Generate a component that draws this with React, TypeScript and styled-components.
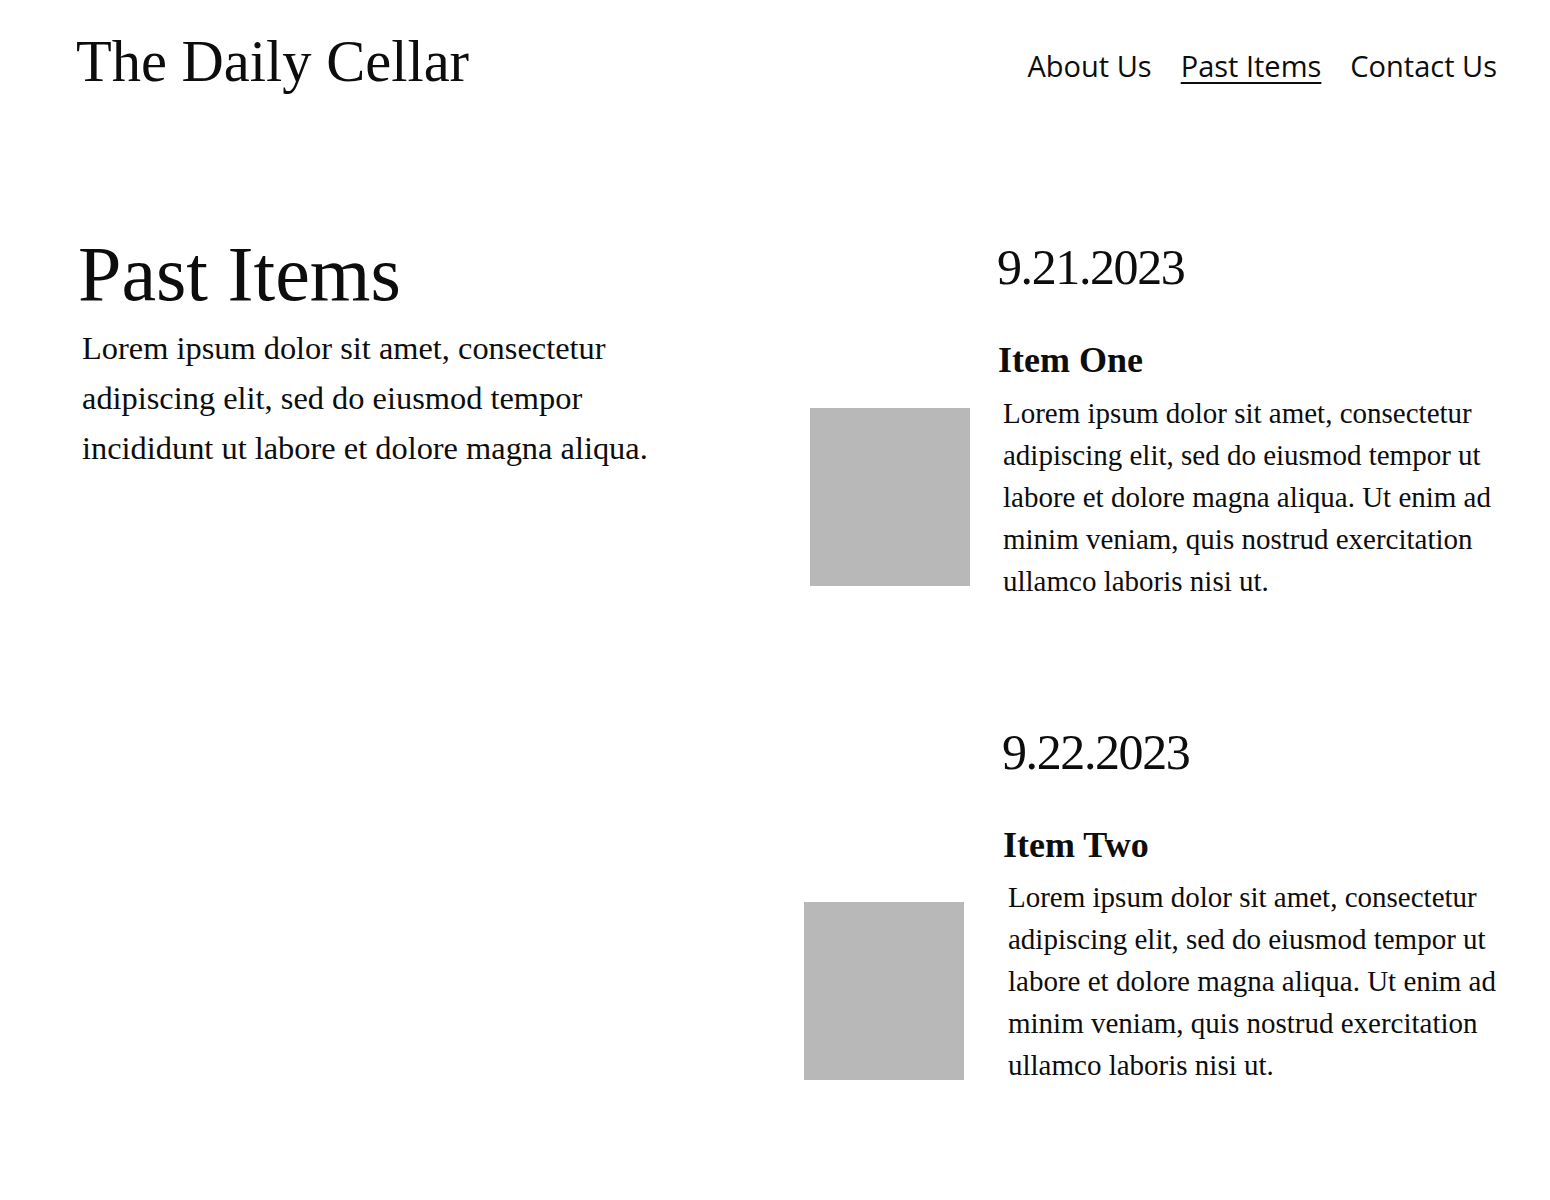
import styled, { createGlobalStyle } from "styled-components"

const GlobalStyle = createGlobalStyle`
  body {
    margin: 0;
    background-color: #ffffff;
    color: #0d0d0d;
    font-family: "Liberation Serif", serif;
  }
`

const Page = styled.div`
  width: 1550px;
  min-height: 1200px;
`

const Header = styled.header`
  display: flex;
  justify-content: space-between;
  align-items: center;
  padding: 30px 53px 0 76px;
`

const Logo = styled.h1`
  margin: 0;
  font-family: "Liberation Serif", serif;
  font-size: 58.5px;
  font-weight: 400;
  line-height: 1.1;
`

const NavList = styled.nav`
  display: flex;
  gap: 29px;
  padding-top: 6px;
`

const NavLink = styled.a<{ $active?: boolean }>`
  font-family: "Open Sans", sans-serif;
  font-size: 29px;
  font-weight: 400;
  color: #0d0d0d;
  text-decoration: ${(p) => (p.$active ? "underline" : "none")};
  text-decoration-thickness: 2px;
  text-underline-offset: 5px;
  cursor: pointer;
`

const Main = styled.main`
  display: grid;
  grid-template-columns: 720px 1fr;
  padding: 133px 53px 80px 78px;
`

const Intro = styled.section`
  display: flex;
  flex-direction: column;
`

const PageTitle = styled.h2`
  margin: 0;
  font-family: "Liberation Serif", serif;
  font-size: 78px;
  font-weight: 400;
  line-height: 1.2;
`

const IntroText = styled.p`
  margin: 2px 0 0 4px;
  width: 600px;
  font-size: 32.4px;
  line-height: 50px;
`

const Entries = styled.section`
  display: flex;
  flex-direction: column;
  gap: 120px;
  margin-top: 10px;
`

const Entry = styled.article<{ $shift: number }>`
  display: flex;
  flex-direction: column;
  padding-left: ${(p) => p.$shift}px;
`

const EntryDate = styled.h3`
  margin: 0 0 0 199px;
  font-family: "Liberation Serif", serif;
  font-size: 50px;
  font-weight: 400;
  letter-spacing: -1.4px;
  line-height: 1.2;
`

const EntryTitle = styled.h4`
  margin: 42px 0 9px 200px;
  font-size: 36px;
  font-weight: 700;
  line-height: 1.2;
`

const EntryRow = styled.div<{ $gap: number }>`
  display: flex;
  align-items: center;
  gap: ${(p) => p.$gap}px;
`

const Thumb = styled.div<{ $nudge: number; $drop: number }>`
  flex: 0 0 160px;
  height: 178px;
  margin-left: ${(p) => p.$nudge}px;
  margin-top: ${(p) => p.$drop * 2}px;
  background-color: #b8b8b8;
`

const EntryText = styled.p`
  margin: 0;
  width: 500px;
  font-size: 29px;
  line-height: 42px;
`

const lorem =
  "Lorem ipsum dolor sit amet, consectetur adipiscing elit, sed do eiusmod tempor ut labore et dolore magna aliqua. Ut enim ad minim veniam, quis nostrud exercitation ullamco laboris nisi ut."

const items = [
  { date: "9.21.2023", title: "Item One", shift: 0, nudge: 12, gap: 33, drop: 0 },
  { date: "9.22.2023", title: "Item Two", shift: 5, nudge: 1, gap: 44, drop: 10 },
]

export default function App() {
  return (
    <Page>
      <GlobalStyle />
      <Header>
        <Logo>The Daily Cellar</Logo>
        <NavList>
          <NavLink>About Us</NavLink>
          <NavLink $active>Past Items</NavLink>
          <NavLink>Contact Us</NavLink>
        </NavList>
      </Header>
      <Main>
        <Intro>
          <PageTitle>Past Items</PageTitle>
          <IntroText>
            Lorem ipsum dolor sit amet, consectetur adipiscing elit, sed do eiusmod tempor
            incididunt ut labore et dolore magna aliqua.
          </IntroText>
        </Intro>
        <Entries>
          {items.map((item) => (
            <Entry key={item.date} $shift={item.shift}>
              <EntryDate>{item.date}</EntryDate>
              <EntryTitle>{item.title}</EntryTitle>
              <EntryRow $gap={item.gap}>
                <Thumb $nudge={item.nudge} $drop={item.drop} />
                <EntryText>{lorem}</EntryText>
              </EntryRow>
            </Entry>
          ))}
        </Entries>
      </Main>
    </Page>
  )
}
